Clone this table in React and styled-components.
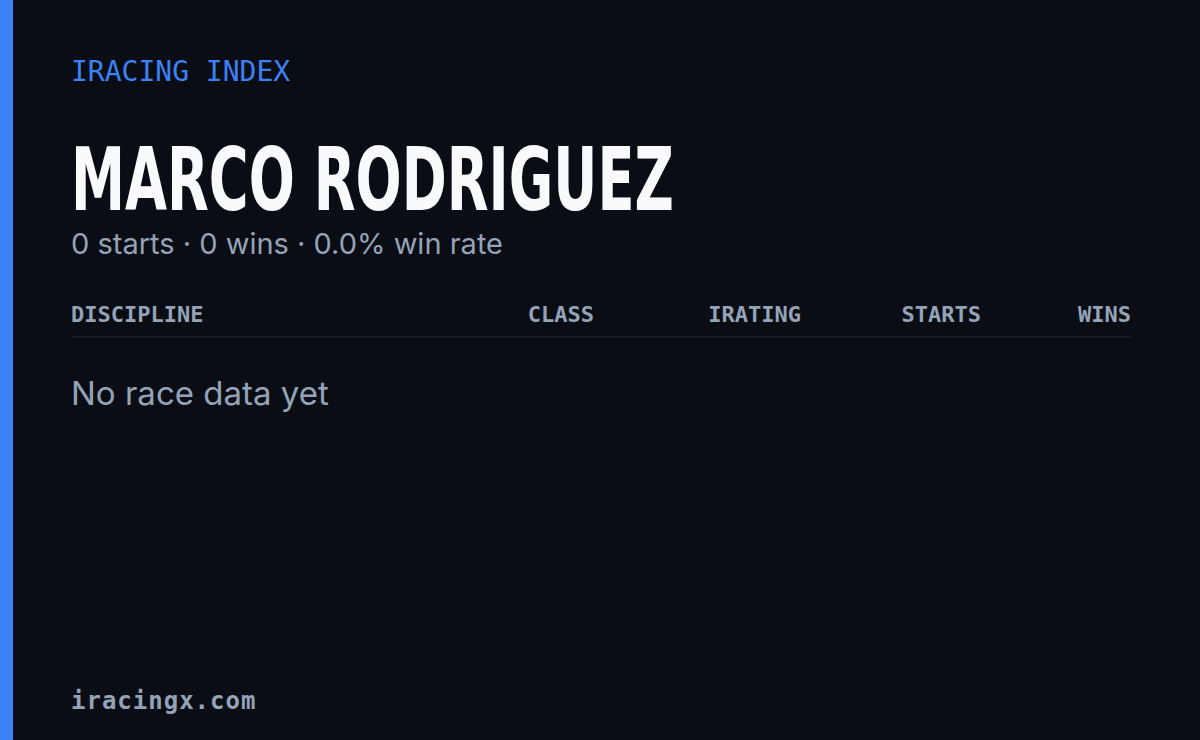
import React from "react";
import styled, { createGlobalStyle } from "styled-components";

const Global = createGlobalStyle`
  html, body { margin: 0; padding: 0; background: #0a0d14; }
  #root { width: 1200px; height: 740px; }
`;

const Card = styled.div`
  width: 1200px;
  height: 740px;
  box-sizing: border-box;
  background: #0a0d14;
  border-left: 13px solid #3b82f6;
  padding: 54px 69px 24px 58px;
  display: flex;
  flex-direction: column;
`;

const Kicker = styled.div`
  font-family: "DejaVu Sans Mono", monospace;
  font-size: 28px;
  line-height: 36px;
  color: #3b82f6;
`;

const Name = styled.h1`
  margin: 46px 0 0;
  font-family: "DejaVu Sans", sans-serif;
  font-weight: 700;
  font-size: 87px;
  line-height: 88px;
  color: #f8fafc;
  white-space: nowrap;
  transform: scaleX(0.624);
  transform-origin: left center;
`;

const Sub = styled.div`
  margin-top: 2px;
  font-family: Inter, sans-serif;
  font-size: 29px;
  line-height: 36px;
  color: #94a3b8;
`;

const Head = styled.div`
  margin-top: 40px;
  display: grid;
  grid-template-columns: 1fr 160px 207px 180px 150px;
  padding-bottom: 8px;
  border-bottom: 2px solid #161a24;
`;

const Col = styled.div`
  font-family: "DejaVu Sans Mono", monospace;
  font-size: 22px;
  line-height: 26px;
  font-weight: 700;
  color: #94a3b8;
  text-align: ${(p) => (p.$left ? "left" : "right")};
`;

const Empty = styled.div`
  margin-top: 35px;
  font-family: Inter, sans-serif;
  font-size: 33px;
  line-height: 40px;
  color: #94a3b8;
`;

const Footer = styled.div`
  margin-top: auto;
  font-family: "DejaVu Sans Mono", monospace;
  font-size: 24px;
  line-height: 30px;
  letter-spacing: 1px;
  font-weight: 700;
  color: #94a3b8;
`;

export default function App() {
  return (
    <>
      <Global />
      <Card>
        <Kicker>IRACING INDEX</Kicker>
        <Name>MARCO RODRIGUEZ</Name>
        <Sub>0 starts · 0 wins · 0.0% win rate</Sub>
        <Head>
          <Col $left>DISCIPLINE</Col>
          <Col>CLASS</Col>
          <Col>IRATING</Col>
          <Col>STARTS</Col>
          <Col>WINS</Col>
        </Head>
        <Empty>No race data yet</Empty>
        <Footer>iracingx.com</Footer>
      </Card>
    </>
  );
}
